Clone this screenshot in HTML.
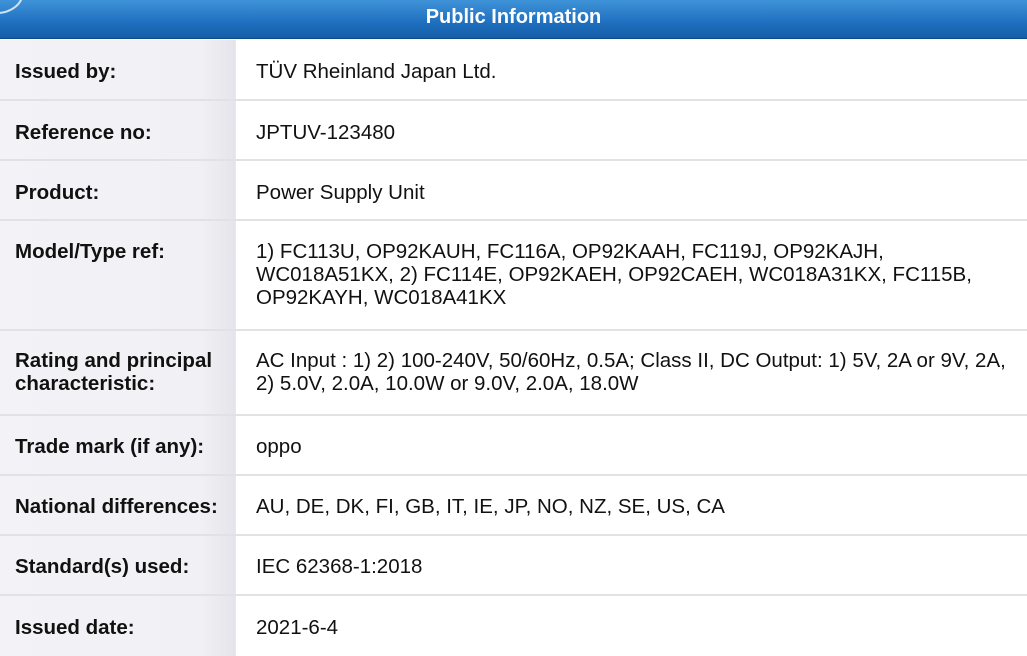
<!DOCTYPE html>
<html><head><style>
body{margin:0;width:1027px;height:652px;overflow:hidden;background:#fff;font-family:"Liberation Sans",Arial,sans-serif;font-size:20.5px;color:#111;position:relative}
.hdr{position:absolute;left:0;top:0;width:1027px;height:38px;background:linear-gradient(#3f93d8,#1f6fbf 60%,#155ea8);color:#fff;font-weight:bold;font-size:20px;text-align:center;line-height:34px;border-bottom:1px solid #0d4a8a}
.circ{position:absolute;left:-30px;top:-30px;width:50px;height:40px;border:2px solid #cfe3f5;border-radius:50%}
.row{position:absolute;left:0;width:1027px;border-bottom:2px solid #e2e2e6}
.l{position:absolute;left:0;top:0;bottom:0;width:236px;background:linear-gradient(90deg,#f3f3f7 0,#f1f1f5 85%,#e4e4ea 100%);font-weight:bold;padding:0 0 0 15px;box-sizing:border-box;border-right:1px solid #e8e8ee;line-height:23px}
.r{position:absolute;left:256px;top:0;right:20px;line-height:23px}
</style></head><body>
<div class="hdr"><div class="circ"></div>Public Information</div>
<div class="row" style="top:40px;height:59px"><div class="l" style="padding-top:20px">Issued by:</div><div class="r" style="top:20px">TÜV Rheinland Japan Ltd.</div></div>
<div class="row" style="top:101px;height:58px"><div class="l" style="padding-top:20px">Reference no:</div><div class="r" style="top:20px">JPTUV-123480</div></div>
<div class="row" style="top:161px;height:58px"><div class="l" style="padding-top:20px">Product:</div><div class="r" style="top:20px">Power Supply Unit</div></div>
<div class="row" style="top:221px;height:108px"><div class="l" style="padding-top:19px">Model/Type ref:</div><div class="r" style="top:19px">1) FC113U, OP92KAUH, FC116A, OP92KAAH, FC119J, OP92KAJH, WC018A51KX, 2) FC114E, OP92KAEH, OP92CAEH, WC018A31KX, FC115B, OP92KAYH, WC018A41KX</div></div>
<div class="row" style="top:331px;height:83px"><div class="l" style="padding-top:18px">Rating and principal characteristic:</div><div class="r" style="top:18px">AC Input : 1) 2) 100-240V, 50/60Hz, 0.5A; Class II, DC Output: 1) 5V, 2A or 9V, 2A, 2) 5.0V, 2.0A, 10.0W or 9.0V, 2.0A, 18.0W</div></div>
<div class="row" style="top:416px;height:58px"><div class="l" style="padding-top:19px">Trade mark (if any):</div><div class="r" style="top:19px">oppo</div></div>
<div class="row" style="top:476px;height:58px"><div class="l" style="padding-top:19px">National differences:</div><div class="r" style="top:19px">AU, DE, DK, FI, GB, IT, IE, JP, NO, NZ, SE, US, CA</div></div>
<div class="row" style="top:536px;height:58px"><div class="l" style="padding-top:19px">Standard(s) used:</div><div class="r" style="top:19px">IEC 62368-1:2018</div></div>
<div class="row" style="top:596px;height:60px;border:0"><div class="l" style="padding-top:20px">Issued date:</div><div class="r" style="top:20px">2021-6-4</div></div>
</body></html>
